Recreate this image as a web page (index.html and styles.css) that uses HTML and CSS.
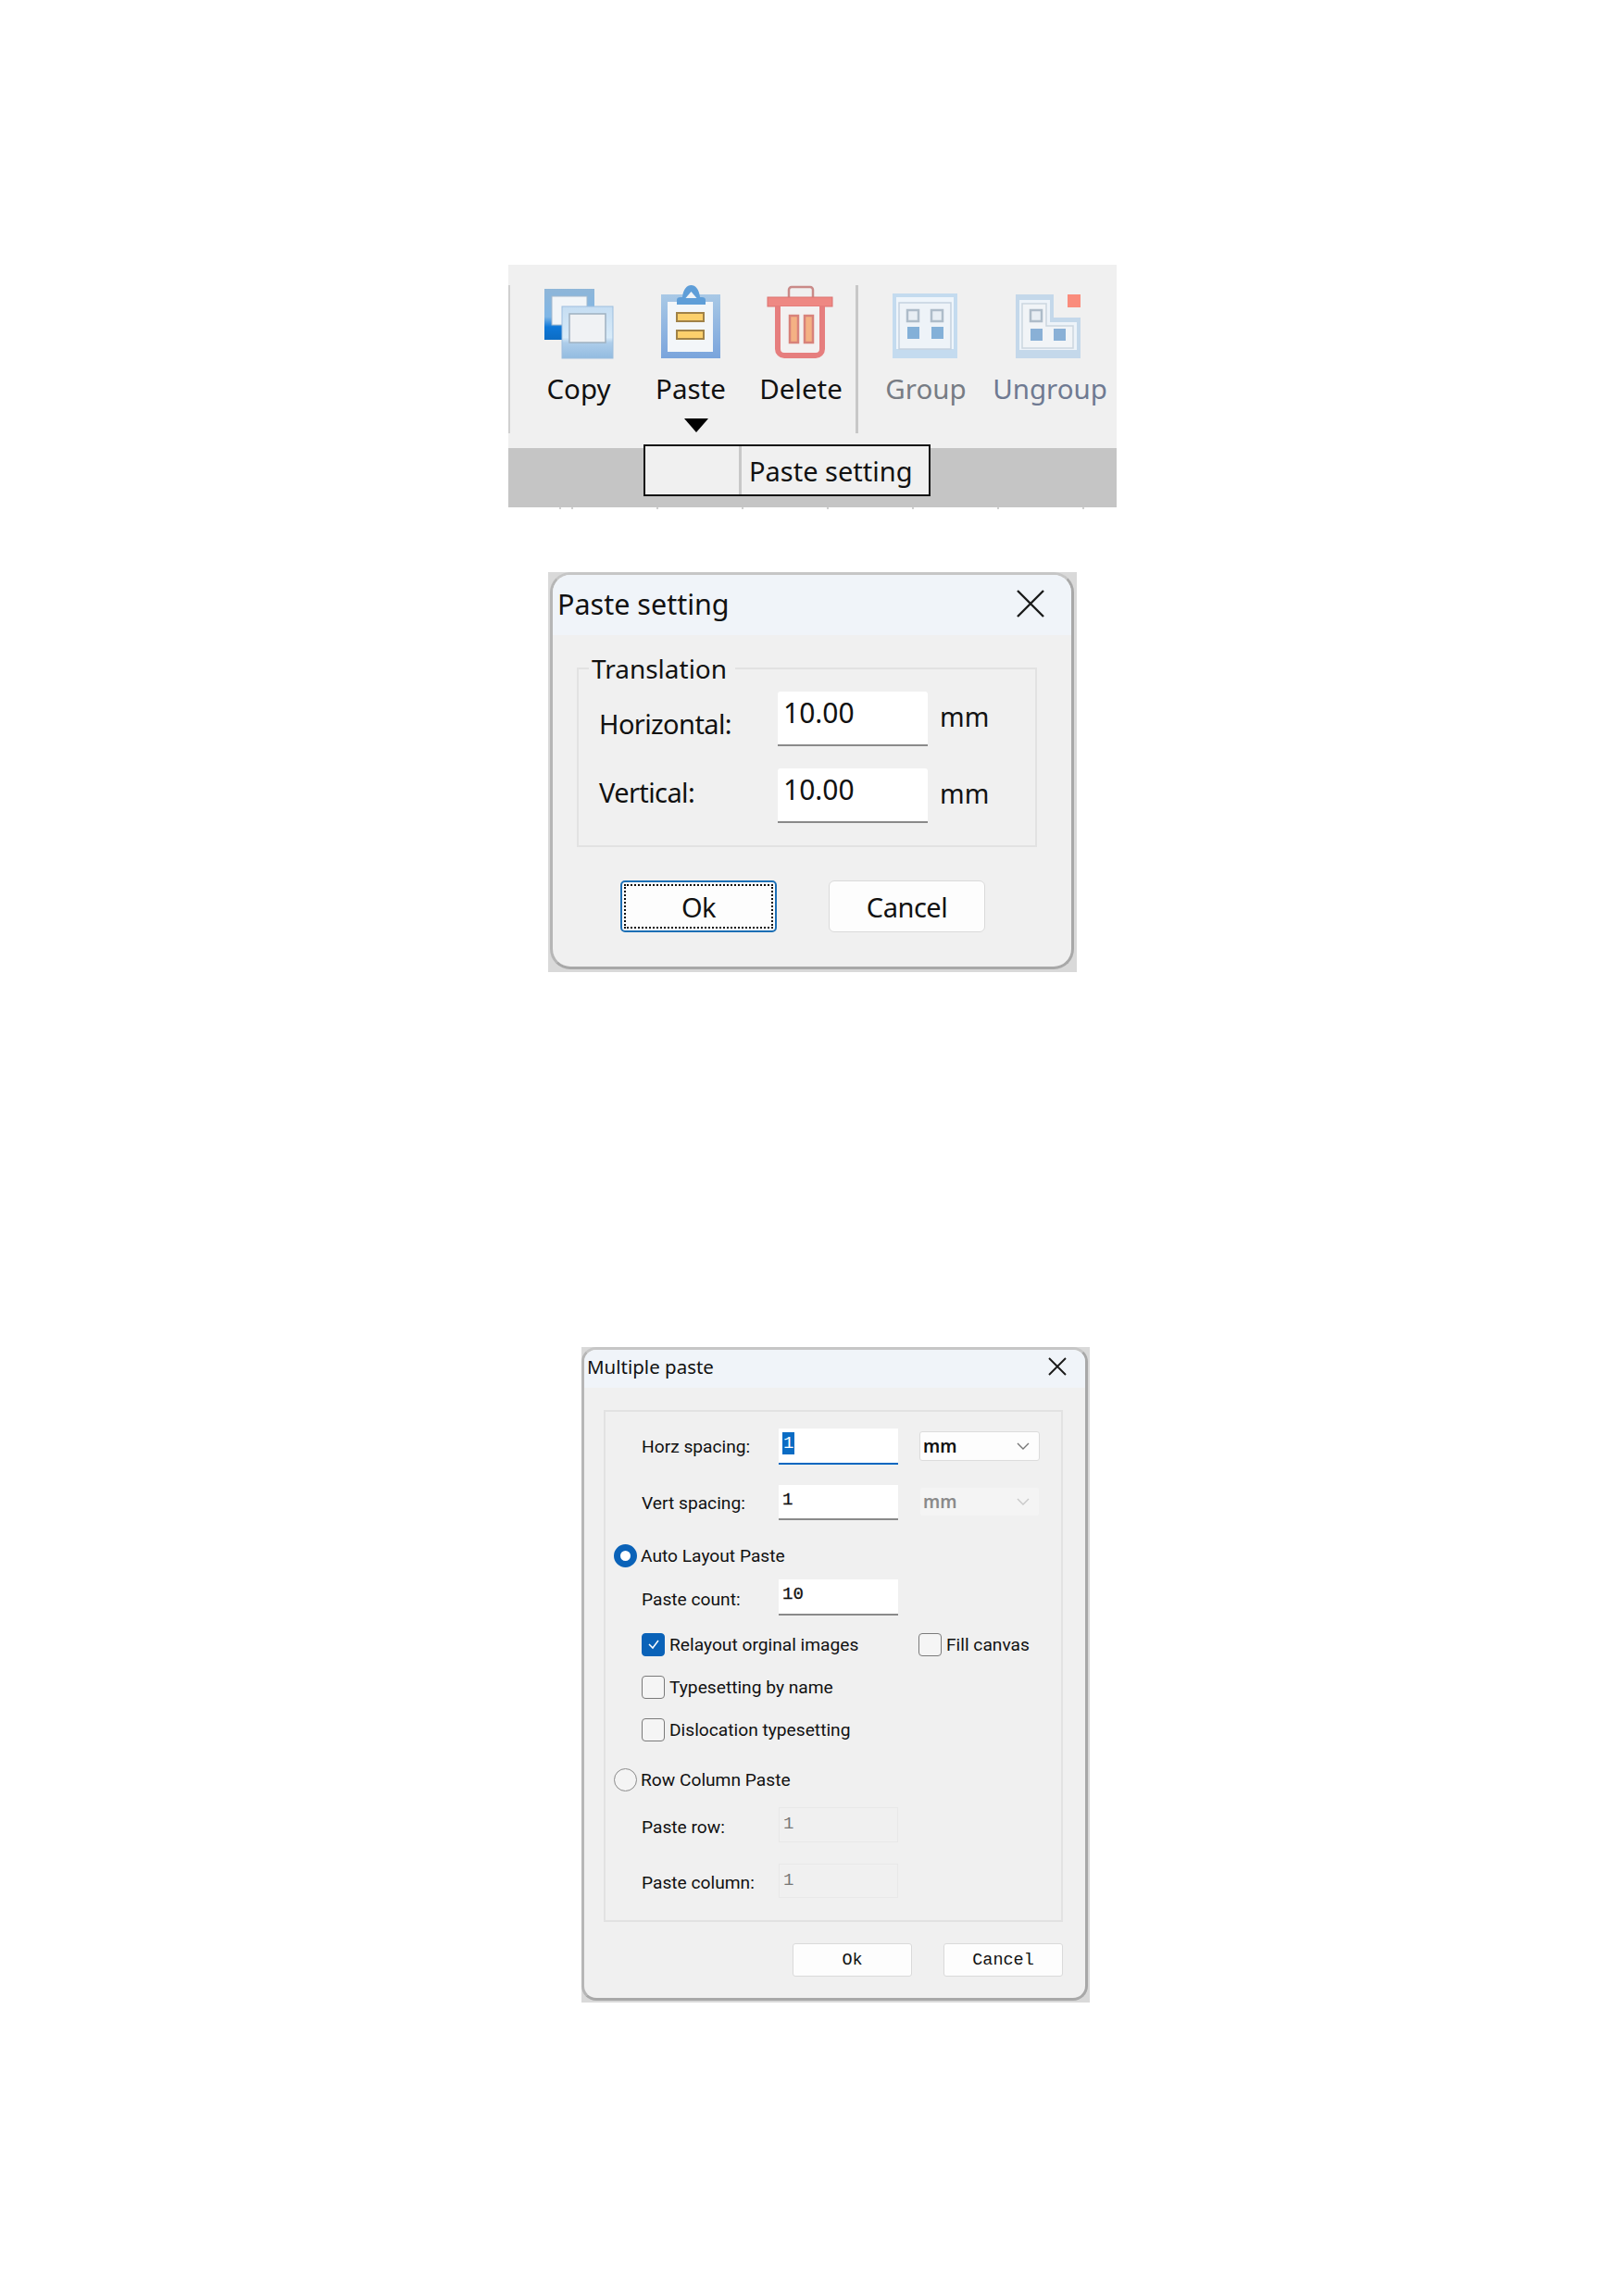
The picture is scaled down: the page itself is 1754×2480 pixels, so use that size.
FILE: index.html
```html
<!DOCTYPE html>
<html lang="en">
<head>
<meta charset="utf-8">
<title>Paste settings</title>
<link rel="stylesheet" href="styles.css">
</head>
<body>
<main class="page">
  <section class="ribbon">
    <div class="tools">
      <div class="tool tool-first">
        <svg class="icon" viewBox="0 0 80 84" width="80" height="84">
          <defs>
            <linearGradient id="cb" x1="0" y1="0" x2="0" y2="1"><stop offset="0" stop-color="#8fb6d8"/><stop offset=".55" stop-color="#7fb6e6"/><stop offset=".75" stop-color="#0f78d8"/><stop offset="1" stop-color="#0c6cc4"/></linearGradient>
            <linearGradient id="cf" x1="0" y1="0" x2="0" y2="1"><stop offset="0" stop-color="#c5ddf2"/><stop offset=".6" stop-color="#d8ebf9"/><stop offset=".7" stop-color="#aecdea"/><stop offset="1" stop-color="#92bbe0"/></linearGradient>
            <linearGradient id="pb" x1="0" y1="0" x2="0" y2="1"><stop offset="0" stop-color="#a9c9e6"/><stop offset="1" stop-color="#7aa4dc"/></linearGradient>
          </defs>
          <rect x="3" y="6" width="54" height="55" fill="url(#cb)"/>
          <rect x="11" y="14" width="38" height="31" fill="#f2f5f8" stroke="#a3b8cc" stroke-width="1"/>
          <rect x="22" y="25" width="55" height="56" fill="url(#cf)" stroke="#9dbedd" stroke-width="1"/>
          <rect x="30" y="33" width="39" height="31" fill="#f0f2f4" stroke="#9fb0c0" stroke-width="1.5"/>
        </svg>
        <span class="tool-label">Copy</span>
      </div>
      <div class="tool">
        <svg class="icon" viewBox="0 0 80 84" width="80" height="84">
          <rect x="8" y="12" width="64" height="69" fill="url(#pb)"/>
          <rect x="15" y="20" width="49" height="54" fill="#f3f6f9"/>
          <path d="M25 23 v-5 q0 -3 4 -3 h2 C32 6 36 2 40.500 2 S49 6 50 15 h2 q4 0 4 3 v5z" fill="#5f9ed8"/>
          <path d="M34.500 16 l6 -7 l6 7z" fill="#f0f4f8"/>
          <rect x="25" y="32" width="29" height="9" fill="#fcd06c" stroke="#a08248" stroke-width="2"/>
          <rect x="25" y="51" width="29" height="9" fill="#fcd06c" stroke="#a08248" stroke-width="2"/>
        </svg>
        <span class="tool-label">Paste</span>
        <span class="drop-arrow"></span>
      </div>
      <div class="tool">
        <svg class="icon" viewBox="0 0 80 84" width="80" height="84">
          <path d="M27 15 v-8 a3 3 0 0 1 3 -3 h20 a3 3 0 0 1 3 3 v8" fill="none" stroke="#c98a88" stroke-width="2.5"/>
          <rect x="4" y="15" width="70" height="10" fill="#ee8883" stroke="#dc7270" stroke-width="1"/>
          <path d="M15 25 v46 a7 7 0 0 0 7 7 h34 a7 7 0 0 0 7 -7 v-46" fill="#f3f1f1" stroke="#e67e7e" stroke-width="6"/>
          <rect x="28" y="35" width="9" height="29" fill="#f4b184" stroke="#d8827a" stroke-width="2.5"/>
          <rect x="44" y="35" width="9" height="29" fill="#f4b184" stroke="#d8827a" stroke-width="2.5"/>
        </svg>
        <span class="tool-label">Delete</span>
      </div>
      <div class="divider"></div>
      <div class="tool">
        <svg class="icon" viewBox="1 0 80 84" width="80" height="84">
          <rect x="5" y="11" width="70" height="70" fill="#c4dbef"/>
          <rect x="9" y="15" width="62" height="56" fill="#eef5fb"/>
          <rect x="12" y="21" width="56" height="50" fill="#eef3f8" stroke="#c5d2df" stroke-width="1.5"/>
          <rect x="21" y="29" width="12" height="12" fill="#e8eef4" stroke="#aebcc9" stroke-width="2.5"/>
          <rect x="47" y="29" width="12" height="12" fill="#e8eef4" stroke="#aebcc9" stroke-width="2.5"/>
          <rect x="21" y="47" width="13" height="13" fill="#83b0d8"/>
          <rect x="47" y="47" width="13" height="13" fill="#83b0d8"/>
        </svg>
        <span class="tool-label tool-label-off">Group</span>
      </div>
      <div class="tool">
        <svg class="icon" viewBox="3 0 80 84" width="80" height="84">
          <path d="M6 12 h41 v25 h29 v44 h-70z" fill="#c4d8ea"/>
          <path d="M10 18 h33 v24 h29 v30 h-62z" fill="#edf3f9"/>
          <path d="M13 22 h26 v24 h29 v24 h-55z" fill="#f1f4f7" stroke="#cbd6e0" stroke-width="1.5"/>
          <rect x="22" y="29" width="12" height="12" fill="#e8eef4" stroke="#aebcc9" stroke-width="2.5"/>
          <rect x="22" y="49" width="13" height="13" fill="#89b0d6"/>
          <rect x="47" y="49" width="13" height="13" fill="#89b0d6"/>
          <rect x="62" y="12" width="14" height="14" fill="#fa8c7c"/>
        </svg>
        <span class="tool-label tool-label-blue">Ungroup</span>
      </div>
    </div>
    <div class="band"></div>
    <div class="ticks"></div>
    <div class="popup"><span class="popup-gutter"></span><span class="popup-text">Paste setting</span></div>
  </section>

  <div class="frame frame-small">
    <section class="dialog dialog-small">
      <header class="title title-small">
        <span>Paste setting</span>
        <svg class="close" viewBox="0 0 30 30" width="30" height="30"><path d="M1 1 L29 29 M29 1 L1 29" stroke="#1a1a1a" stroke-width="2.4" fill="none"/></svg>
      </header>
      <fieldset class="group-small">
        <legend>Translation</legend>
        <div class="row-small"><label class="row-small-label">Horizontal:</label><div class="field-big">10.00</div><span class="unit">mm</span></div>
        <div class="row-small row-small-next"><label class="row-small-label row-small-label-v">Vertical:</label><div class="field-big">10.00</div><span class="unit">mm</span></div>
      </fieldset>
      <div class="actions-small">
        <div class="btn-big btn-focus"><span class="focus-ring">Ok</span></div>
        <div class="btn-big">Cancel</div>
      </div>
    </section>
  </div>

  <div class="frame frame-wide">
    <section class="dialog dialog-wide">
      <header class="title title-wide">
        <span>Multiple paste</span>
        <svg class="close" viewBox="0 0 20 20" width="20" height="20"><path d="M1 1 L19 19 M19 1 L1 19" stroke="#1a1a1a" stroke-width="1.9" fill="none"/></svg>
      </header>
      <div class="group-wide">
        <div class="row r-first"><label>Horz spacing:</label><div class="field field-active"><span class="selected">1</span></div><div class="select"><span>mm</span><svg viewBox="0 0 14 8" width="14" height="8"><path d="M1 1 L7 7 L13 1" fill="none" stroke="#777" stroke-width="1.4"/></svg></div></div>
        <div class="row r-second"><label>Vert spacing:</label><div class="field">1</div><div class="select select-off"><span>mm</span><svg viewBox="0 0 14 8" width="14" height="8"><path d="M1 1 L7 7 L13 1" fill="none" stroke="#c8c8c8" stroke-width="1.4"/></svg></div></div>
        <div class="option o-radio"><span class="radio radio-on"></span><span>Auto Layout Paste</span></div>
        <div class="row r-count"><label>Paste count:</label><div class="field">10</div></div>
        <div class="option o-check o-split">
          <span class="o-left"><span class="check check-on"><svg viewBox="0 0 14 12" width="14" height="12"><path d="M2 6 L6 10 L12 2" fill="none" stroke="#fff" stroke-width="1.5"/></svg></span><span>Relayout orginal images</span></span>
          <span class="o-right"><span class="check"></span><span>Fill canvas</span></span>
        </div>
        <div class="option o-check"><span class="check"></span><span>Typesetting by name</span></div>
        <div class="option o-check"><span class="check"></span><span>Dislocation typesetting</span></div>
        <div class="option o-radio o-radio-2"><span class="radio"></span><span>Row Column Paste</span></div>
        <div class="row r-row"><label>Paste row:</label><div class="field field-off">1</div></div>
        <div class="row r-col"><label>Paste column:</label><div class="field field-off">1</div></div>
      </div>
      <div class="actions-wide">
        <div class="btn-small">Ok</div>
        <div class="btn-small">Cancel</div>
      </div>
    </section>
  </div>
</main>
</body>
</html>
```
FILE: styles.css
```css
* { box-sizing: border-box; }
html, body { margin: 0; background: #fff; }
body { font-family: "Noto Sans", "Open Sans", sans-serif; color: #111; }
.page { width: 1754px; height: 2480px; padding-top: 286px; display: flex; flex-direction: column; align-items: flex-start; }

/* Ribbon */
.ribbon { position: relative; width: 657px; height: 264px; margin-left: 549px; }
.tools { height: 198px; background: #f0f0f0; display: grid; grid-template-columns: 15px 122px 120px 118px 2px 148px 120px; }
.tools::before { content: ""; width: 2px; height: 160px; margin-top: 22px; background: #d0d0d0; }
.tool { position: relative; display: flex; flex-direction: column; align-items: center; padding-top: 20px; }
.tool-label { margin-top: 9px; font-size: 29.500px; line-height: 42px; color: #111; white-space: nowrap; }
.tool-label-off { color: #777c84; }
.tool-label-blue { color: #6f7a92; }
.icon { display: block; flex: none; }
.drop-arrow { position: absolute; left: 53px; top: 166px; width: 0; height: 0; border-left: 13px solid transparent; border-right: 13px solid transparent; border-top: 15px solid #000; }
.divider { width: 3px; height: 160px; margin-top: 22px; background: #c8c8c8; }
.band { height: 64px; background: #c5c5c5; }
.ticks { height: 2px; background: repeating-linear-gradient(90deg, #cfcfcf 0 2px, #fff 2px 92px); background-position: 68px 0; }
.popup { position: absolute; left: 146px; top: 194px; width: 310px; height: 56px; border: 2px solid #111; background: #f0f0f0; display: flex; align-items: center; }
.popup-gutter { width: 104px; height: 100%; border-right: 3px solid #c8c8c8; }
.popup-text { margin-left: 8px; font-size: 29px; line-height: 1; white-space: nowrap; }

/* Dialogs */
.frame { background: #d9d9d9; }
.dialog { background: #f0f0f0; border: 3px solid #a8a8a8; border-top-color: #c6c6c6; border-left-color: #b6b6b6; overflow: hidden; height: 100%; }
.title { display: flex; justify-content: space-between; align-items: center; background: #f0f4f9; white-space: nowrap; }

.frame-small { width: 571px; height: 432px; margin: 68px 0 0 592px; padding: 0 3px 3px 2px; }
.dialog-small { border-radius: 22px; }
.title-small { height: 65px; padding: 0 29px 4px 5px; font-size: 30.500px; }
.group-small { margin: 19px 0 0 26px; padding: 0; width: 497px; height: 210px; min-height: 0; border: 2px solid #e2e2e2; }
.group-small legend { margin-left: 11px; padding: 0 9px 0 3px; font-size: 28px; line-height: 34px; }
.row-small { display: flex; height: 59px; margin-top: 8px; }
.row-small-next { margin-top: 24px; }
.row-small-label { width: 215px; padding: 15px 0 0 22px; font-size: 29px; letter-spacing: -0.600px; line-height: 40px; }
.row-small-label-v { padding-top: 6px; }
.field-big { width: 162px; height: 59px; background: #fff; border-bottom: 2px solid #8a8a8a; border-radius: 3px 3px 0 0; padding: 3px 0 0 6px; font-size: 30px; line-height: 40px; }
.unit { margin-left: 13px; padding-top: 7px; font-size: 28.500px; line-height: 40px; }
.actions-small { display: flex; gap: 56px; margin: 36px 0 0 73px; }
.btn-big { width: 169px; height: 56px; background: #fdfdfd; border: 1px solid #dadada; border-radius: 6px; display: flex; align-items: center; justify-content: center; font-size: 29px; letter-spacing: -0.500px; }
.btn-focus { border: 2px solid #1c6fb5; padding: 2px; border-radius: 5px; }
.focus-ring { width: 100%; height: 100%; border: 2px dotted #111; display: flex; align-items: center; justify-content: center; }

.frame-wide { width: 549px; height: 708px; margin: 405px 0 0 628px; padding: 0 2px 2px 0; }
.dialog-wide { border-radius: 16px; }
.title-wide { height: 41px; padding: 0 20px 5px 3px; font-size: 20.500px; }
.group-wide { width: 496px; height: 553px; margin: 24px 0 0 21px; border: 2px solid #e2e2e2; padding-top: 18px; font-family: "Roboto", "Noto Sans", sans-serif; font-size: 19.200px; }
.row { display: grid; grid-template-columns: 148px 129px 23px 130px; margin-left: 39px; align-items: center; }
.row label { white-space: nowrap; }
.r-first { height: 39px; }
.r-second { height: 38px; margin-top: 22px; }
.r-count { height: 39px; margin-top: 11px; }
.r-count label, .r-row label, .r-col label { padding-top: 4px; }
.r-row { height: 38px; margin-top: 15px; }
.r-col { height: 37px; margin-top: 23px; }
.field { height: 100%; background: #fff; border-bottom: 2px solid #8a8a8a; padding: 4px 0 0 4px; font-family: "Liberation Mono", monospace; font-size: 19px; line-height: 24px; -webkit-text-stroke: 0.300px #111; }
.field-active { border-bottom-color: #0067c0; -webkit-text-stroke: 0; }
.selected { background: #0a6cc4; color: #fff; display: inline-block; padding: 0 1px; }
.field-off { background: #f0f0f0; border: 1px solid #e8e8e8; color: #777; padding-top: 5px; -webkit-text-stroke: 0; }
.select { grid-column: 4; height: 32px; margin-top: -2px; background: #fdfdfd; border: 1px solid #dcdcdc; border-radius: 3px; padding: 0 10px 0 3px; display: flex; align-items: center; justify-content: space-between; font-family: "Noto Sans", sans-serif; font-weight: 600; font-size: 19px; }
.select-off { background: #f4f4f4; border-color: #f0f0f0; color: #8a8a8a; }
.option { display: flex; align-items: center; height: 30px; white-space: nowrap; }
.o-radio { margin: 23px 0 0 9px; gap: 4px; }
.o-radio-2 { margin-top: 24px; }
.o-check { margin: 16px 0 0 39px; gap: 5px; }
.o-split { gap: 0; }
.o-left, .o-right { display: flex; align-items: center; gap: 5px; }
.o-left { width: 299px; }
.radio { width: 25px; height: 25px; border-radius: 50%; border: 1.5px solid #8a8a8a; background: #f4f4f4; }
.radio-on { border: 7px solid #0a62b8; background: #fff; }
.check { width: 25px; height: 25px; border-radius: 4px; border: 1.5px solid #7a7a7a; background: #f5f5f5; display: flex; align-items: center; justify-content: center; }
.check-on { background: #0a62b8; border-color: #0a62b8; }
.actions-wide { display: flex; gap: 34px; margin: 23px 0 0 225px; }
.btn-small { width: 129px; height: 36px; background: #fdfdfd; border: 1px solid #dadada; border-radius: 3px; display: flex; align-items: center; justify-content: center; font-family: "Liberation Mono", monospace; font-size: 18.500px; }
```
